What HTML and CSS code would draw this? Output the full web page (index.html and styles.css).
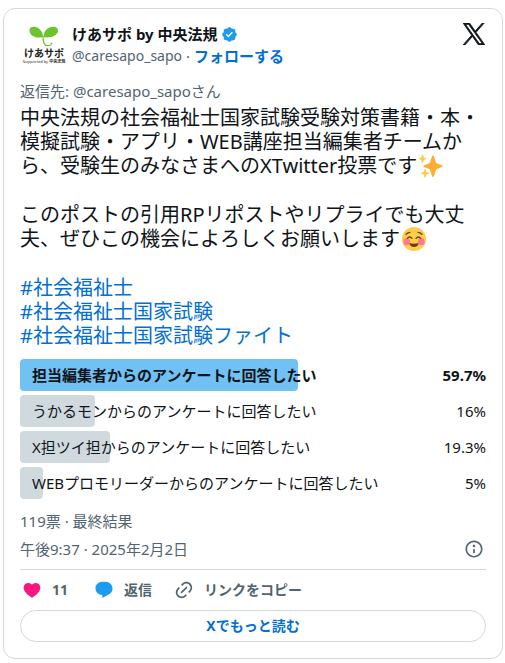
FILE: index.html
```html
<!DOCTYPE html>
<html lang="ja">
<head>
    <meta charset="UTF-8">
    <meta name="viewport" content="width=device-width, initial-scale=1.0">
    <title>けあサポ by 中央法規</title>
    <link rel="stylesheet" href="styles.css">
</head>
<body>
    <article class="tweet">
        <header class="tweet-header">
            <a class="avatar" href="#" aria-label="けあサポ">
                <svg class="avatar-leaf" viewBox="0 0 30 21">
                    <path fill="#6cc32b" d="M14 11C9 12.500 1 11 .5 4.500.2 0 6 0 9.500 2.200 12.500 4 14 7.500 14 11z"/>
                    <path fill="#6cc32b" d="M14.500 11c0-4 1.500-7 5-9C23.500-.2 29 .3 29 4.500c-.2 6-9 8-14.500 6.500z"/>
                    <path fill="none" stroke="#6cc32b" stroke-width="1.200" d="M14.300 10c-.8 5 1 9.500 4.200 9.700 2.500 0 4-1 4.500-3"/>
                </svg>
                <span class="avatar-name">けあサポ</span>
                <span class="avatar-sub">Supported by <b>中央法規</b></span>
            </a>
            <div class="author">
                <a class="author-name" href="#">
                    <span>けあサポ by 中央法規</span>
                    <svg class="badge" viewBox="0 0 22 22"><path fill="#1d9bf0" d="M20.396 11c-.018-.646-.215-1.275-.57-1.816-.354-.54-.852-.972-1.438-1.246.223-.607.27-1.264.14-1.897-.131-.634-.437-1.218-.882-1.687-.47-.445-1.053-.75-1.687-.882-.633-.13-1.290-.083-1.897.14-.273-.587-.704-1.086-1.245-1.440S11.647 1.620 11 1.604c-.646.017-1.273.213-1.813.568s-.969.854-1.240 1.440c-.608-.223-1.267-.272-1.902-.14-.635.130-1.220.436-1.690.882-.445.470-.749 1.055-.878 1.688-.130.633-.080 1.290.144 1.896-.587.274-1.087.705-1.443 1.245-.356.540-.555 1.170-.574 1.817.020.647.218 1.276.574 1.817.356.540.856.972 1.443 1.245-.224.606-.274 1.263-.144 1.896.130.634.433 1.218.877 1.688.470.443 1.054.747 1.687.878.633.132 1.290.084 1.897-.136.274.586.705 1.084 1.246 1.439.540.354 1.170.551 1.816.569.647-.016 1.276-.213 1.817-.567s.972-.854 1.245-1.440c.604.239 1.266.296 1.903.164.636-.132 1.220-.447 1.680-.907.460-.460.776-1.044.908-1.681s.075-1.299-.165-1.903c.586-.274 1.084-.705 1.439-1.246.354-.540.551-1.170.569-1.816z"/><path fill="#fff" d="M9.662 14.850l-3.429-3.428 1.293-1.302 2.072 2.072 4.400-4.794 1.347 1.246z"/></svg>
                </a>
                <div class="author-sub">
                    <a class="handle" href="#">@caresapo_sapo</a>
                    <span>·</span>
                    <a class="follow" href="#">フォローする</a>
                </div>
            </div>
            <a class="x-logo" href="#" aria-label="Xで見る">
                <svg viewBox="0 0 24 24"><path fill="#0f1419" stroke="#0f1419" stroke-width=".8" d="M14.258 10.152L23.176 0h-2.113l-7.747 8.813L7.133 0H0l9.352 13.328L0 23.973h2.113l8.176-9.309 6.531 9.309h7.133zm-2.895 3.293l-.949-1.328L2.875 1.560h3.246l6.086 8.523.945 1.328 7.910 11.078h-3.246z"/></svg>
            </a>
        </header>

        <a class="reply-to" href="#">返信先: @caresapo_sapoさん</a>

        <div class="tweet-text">
            <p>中央法規の社会福祉士国家試験受験対策書籍・本・<br>模擬試験・アプリ・WEB講座担当編集者チームか<br>ら、受験生のみなさまへのXTwitter投票です<svg class="emoji" viewBox="0 0 36 36" role="img" aria-label="きらきら"><path fill="#ffac33" d="M34.350 16.700l-8.600-3.200-3.300-10.300c-.5-1.400-2.400-1.400-2.900 0l-3.300 10.300-8.600 3.200c-1.300.5-1.300 2.300 0 2.800l8.600 3.200 3.300 10.600c.5 1.400 2.400 1.400 2.900 0l3.300-10.600 8.600-3.200c1.300-.5 1.300-2.300 0-2.800z"/><path fill="#ffcc4d" d="M14.300 28l-3.200-1.200-1.200-3.700c-.3-.8-1.400-.8-1.700 0L7 26.800 3.800 28c-.8.3-.8 1.300 0 1.600L7 30.800l1.200 4c.3.8 1.400.8 1.700 0l1.200-4 3.200-1.200c.8-.3.8-1.300 0-1.600zM10.300 6.300L7.400 5.200 6.200 1.500c-.3-.8-1.400-.8-1.700 0L3.300 5.200.6 6.300c-.8.3-.8 1.400 0 1.700l2.700 1.100 1.200 3.800c.3.800 1.400.8 1.700 0l1.200-3.800L10.300 8c.8-.3.8-1.400 0-1.700z"/></svg></p>
            <p>このポストの引用RPリポストやリプライでも大丈<br>夫、ぜひこの機会によろしくお願いします<svg class="emoji" viewBox="0 0 36 36" role="img" aria-label="笑顔"><circle cx="18" cy="18" r="18" fill="#ffcc4d"/><circle cx="7" cy="22" r="5" fill="#ff7892"/><circle cx="29" cy="22" r="5" fill="#ff7892"/><path fill="none" stroke="#664500" stroke-width="2" stroke-linecap="round" d="M8 17q3.500-4 7 0M21 17q3.500-4 7 0M6 11q3-3 6-3M30 11q-3-3-6-3"/><path fill="#664500" d="M11 24q7 2.500 14 0-1 6-7 6t-7-6z"/></svg></p>
            <p class="hashtags">
                <a href="#">#社会福祉士</a>
                <a href="#">#社会福祉士国家試験</a>
                <a href="#">#社会福祉士国家試験ファイト</a>
            </p>
        </div>

        <ul class="poll">
            <li class="poll-row winner">
                <span class="poll-bar" style="width: 59.7%"></span>
                <span class="poll-label">担当編集者からのアンケートに回答したい</span>
                <span class="poll-value">59.7%</span>
            </li>
            <li class="poll-row">
                <span class="poll-bar" style="width: 16%"></span>
                <span class="poll-label">うかるモンからのアンケートに回答したい</span>
                <span class="poll-value">16%</span>
            </li>
            <li class="poll-row">
                <span class="poll-bar" style="width: 19.3%"></span>
                <span class="poll-label">X担ツイ担からのアンケートに回答したい</span>
                <span class="poll-value">19.3%</span>
            </li>
            <li class="poll-row">
                <span class="poll-bar" style="width: 5%"></span>
                <span class="poll-label">WEBプロモリーダーからのアンケートに回答したい</span>
                <span class="poll-value">5%</span>
            </li>
        </ul>
        <p class="votes">119票 · 最終結果</p>

        <div class="meta">
            <a href="#">午後9:37 · 2025年2月2日</a>
            <a class="info" href="#" aria-label="詳細">
                <svg viewBox="0 0 24 24"><path fill="#536471" d="M13.500 8.500c0 .83-.67 1.500-1.500 1.500s-1.500-.67-1.500-1.500S11.170 7 12 7s1.500.67 1.500 1.500zM13 17v-5h-2v5h2zm-1 5.250c5.660 0 10.250-4.590 10.250-10.250S17.660 1.750 12 1.750 1.750 6.340 1.750 12 6.340 22.250 12 22.250zM20.250 12c0 4.560-3.690 8.250-8.250 8.250S3.750 16.560 3.750 12 7.440 3.750 12 3.750s8.250 3.690 8.250 8.250z"/></svg>
            </a>
        </div>

        <div class="actions">
            <a class="action" href="#">
                <svg viewBox="0 0 24 24"><path fill="#f91880" d="M20.884 13.190c-1.351 2.480-4.001 5.120-8.379 7.670l-.503.3-.504-.3c-4.379-2.550-7.029-5.190-8.382-7.670-1.360-2.500-1.410-4.860-.514-6.670.887-1.790 2.647-2.910 4.601-3.010 1.651-.09 3.368.56 4.798 2.010 1.429-1.450 3.146-2.100 4.796-2.010 1.954.1 3.714 1.220 4.601 3.010.896 1.810.846 4.170-.514 6.670z"/></svg>
                <span>11</span>
            </a>
            <a class="action" href="#">
                <svg viewBox="0 0 24 24"><path fill="#1d9bf0" d="M1.751 10c0-4.420 3.584-8 8.005-8h4.366c4.490 0 8.129 3.640 8.129 8.130 0 2.960-1.607 5.680-4.196 7.110l-8.054 4.460v-3.690h-.067c-4.490.1-8.183-3.510-8.183-8.010z"/></svg>
                <span>返信</span>
            </a>
            <button class="action" type="button">
                <svg viewBox="0 0 24 24"><path fill="#536471" d="M18.360 5.640c-1.950-1.960-5.110-1.960-7.070 0L9.880 7.050 8.460 5.640l1.420-1.420c2.730-2.730 7.160-2.730 9.900 0 2.730 2.740 2.730 7.170 0 9.900l-1.420 1.420-1.410-1.420 1.410-1.410c1.960-1.960 1.960-5.120 0-7.070zm-2.120 3.530l-7.070 7.070-1.410-1.410 7.070-7.070 1.410 1.410zm-12.020.71l1.420-1.420 1.410 1.420-1.410 1.410c-1.960 1.960-1.960 5.120 0 7.070 1.950 1.960 5.110 1.960 7.070 0l1.410-1.410 1.420 1.410-1.420 1.420c-2.730 2.730-7.160 2.730-9.900 0-2.730-2.740-2.730-7.170 0-9.900z"/></svg>
                <span>リンクをコピー</span>
            </button>
        </div>

        <a class="read-more" href="#">Xでもっと読む</a>
    </article>
</body>
</html>
```
FILE: styles.css
```css
body {
    margin: 0;
    padding: 8px 2px 4px 3px;
    background-color: #fff;
    font-family: "Noto Sans", "Noto Sans CJK JP", sans-serif;
    font-size: 15px;
    line-height: 20px;
    color: #0f1419;
}

a {
    color: #006fd6;
    text-decoration: none;
}

p,
ul {
    margin: 0;
    padding: 0;
}

svg {
    display: block;
}

.tweet {
    border: 1px solid #cfd9de;
    border-radius: 12px;
    padding: 12px 16px 16px;
}

/* Header */
.tweet-header {
    display: flex;
    align-items: flex-start;
}

.avatar {
    display: flex;
    flex-direction: column;
    align-items: center;
    width: 48px;
    height: 48px;
    margin-right: 4px;
    padding-top: 5px;
    box-sizing: border-box;
    color: #222;
    white-space: nowrap;
}

.avatar-leaf {
    width: 30px;
    height: 21px;
}

.avatar-name {
    font-size: 10px;
    line-height: 12px;
    font-weight: bold;
}

.avatar-sub {
    font-size: 4px;
    line-height: 6px;
}

.author {
    flex: 1;
    padding-top: 2px;
}

.author-name {
    display: flex;
    align-items: center;
    gap: 3px;
    height: 22px;
    font-weight: bold;
    color: #0f1419;
}

.badge {
    width: 17px;
    height: 17px;
}

.author-sub {
    display: flex;
    gap: 4px;
    height: 22px;
    line-height: 22px;
    color: #536471;
}

.handle,
.reply-to,
.meta a {
    color: #536471;
}

.handle {
    font-size: 14px;
}

.follow {
    font-weight: bold;
}

.x-logo {
    padding: 2px 1px 0 0;
}

.x-logo svg {
    width: 22px;
    height: 22px;
}

.reply-to {
    display: block;
    margin-top: 12px;
}

/* Text */
.tweet-text {
    margin-top: 5px;
    font-size: 20px;
    line-height: 24px;
}

.tweet-text p + p {
    margin-top: 25px;
}

.hashtags a {
    display: block;
}

.emoji {
    display: inline-block;
    width: 24px;
    height: 24px;
    margin: 0 2px;
    vertical-align: bottom;
}

/* Poll */
.poll {
    display: grid;
    gap: 4px;
    margin-top: 11px;
    list-style: none;
}

.poll-row {
    position: relative;
    display: flex;
    justify-content: space-between;
    align-items: center;
    height: 32px;
    padding-left: 12px;
}

.poll-bar {
    position: absolute;
    top: 0;
    bottom: 0;
    left: 0;
    border-radius: 4px;
    background-color: #cfd9de;
}

.poll-label,
.poll-value {
    position: relative;
}

.winner {
    font-weight: bold;
}

.winner .poll-bar {
    background-color: #71c1f4;
}

.votes {
    margin-top: 12px;
    color: #536471;
}

/* Footer */
.meta {
    display: flex;
    justify-content: space-between;
    align-items: center;
    margin-top: 8px;
    padding-bottom: 10px;
    border-bottom: 1px solid #cfd9de;
}

.info {
    padding-right: 2px;
}

.info svg,
.action svg {
    width: 20px;
    height: 20px;
}

.actions {
    display: flex;
    gap: 22px;
    padding: 10px 0;
    padding-left: 2px;
}

.action {
    display: flex;
    align-items: center;
    gap: 10px;
    min-width: 50px;
    padding: 0;
    border: none;
    background: none;
    font-family: inherit;
    font-size: 14px;
    font-weight: bold;
    line-height: 20px;
    color: #536471;
    cursor: pointer;
}

.read-more {
    display: block;
    border: 1px solid #cfd9de;
    border-radius: 16px;
    font-size: 14px;
    font-weight: bold;
    line-height: 30px;
    text-align: center;
}

.read-more:hover {
    background-color: #e6f1fb;
}
```
